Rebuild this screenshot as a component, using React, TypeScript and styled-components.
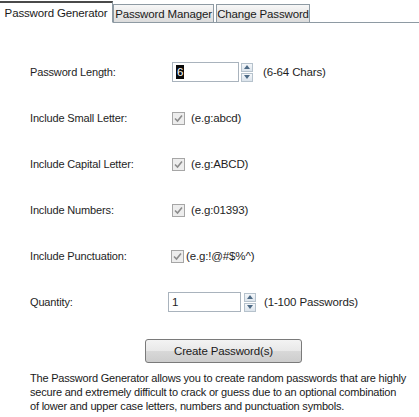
import styled, { createGlobalStyle } from "styled-components";

const GlobalStyle = createGlobalStyle`
  * {
    box-sizing: border-box;
    margin: 0;
    padding: 0;
  }

  body {
    background: #ffffff;
    font-family: "Liberation Sans", Arial, sans-serif;
    font-size: 11px;
    letter-spacing: -0.15px;
    color: #1e1e1e;
  }
`;

const Window = styled.div`
  width: 419px;
  height: 417px;
  background: #ffffff;
  overflow: hidden;
`;

const TabStrip = styled.div`
  display: flex;
  align-items: flex-end;
  height: 23px;
  border-bottom: 1px solid #8e9aa3;
`;

const Tab = styled.div<{ active?: boolean; w: number }>`
  display: flex;
  align-items: center;
  justify-content: center;
  width: ${(p) => p.w}px;
  height: ${(p) => (p.active ? "22px" : "18px")};
  margin-bottom: ${(p) => (p.active ? "-1px" : "0")};
  margin-right: ${(p) => (p.active ? "0" : "2px")};
  font-size: 11.5px;
  color: #1a1a1a;
  background: ${(p) =>
    p.active ? "#ffffff" : "linear-gradient(#f7f7f7, #e6e6e6 60%, #dcdcdc)"};
  border: 1px solid #8e9aa3;
  border-top: ${(p) => (p.active ? "2px solid #4a4a4a" : "1px solid #8e9aa3")};
  border-bottom: ${(p) => (p.active ? "1px solid #ffffff" : "none")};
  border-left: ${(p) => (p.active ? "none" : "1px solid #8e9aa3")};
  white-space: nowrap;
`;

const Form = styled.div`
  display: flex;
  flex-direction: column;
  padding: 26px 0 0 30px;
`;

const Row = styled.div`
  display: grid;
  grid-template-columns: 138px auto;
  align-items: center;
  height: 46px;
`;

const Label = styled.span`
  font-size: 11px;
`;

const Control = styled.div<{ shift?: number }>`
  display: flex;
  align-items: center;
  margin-left: ${(p) => p.shift ?? 0}px;
`;

const NumberBox = styled.div<{ w: number }>`
  display: flex;
  align-items: center;
  width: ${(p) => p.w}px;
  height: 20px;
  border: 1px solid #a9b3bd;
  background: #ffffff;
  padding-left: 3px;
  font-size: 11.5px;
`;

const Selected = styled.span`
  background: #0a0a0a;
  color: #ffffff;
  padding: 0 1px;
  line-height: 14px;
`;

const Spinner = styled.div<{ gap: number }>`
  display: flex;
  flex-direction: column;
  gap: 1px;
  margin-left: ${(p) => p.gap}px;
`;

const SpinButton = styled.div`
  width: 12px;
  height: 9px;
  border: 1px solid #b6c2cc;
  background: linear-gradient(#f4f7fa, #dce4ec);
  display: flex;
  align-items: center;
  justify-content: center;
`;

const Hint = styled.span<{ gap: number }>`
  margin-left: ${(p) => p.gap}px;
  font-size: 11.5px;
`;

const Check = styled.div`
  width: 13px;
  height: 13px;
  border: 1px solid #a6a6a6;
  background: #ededed;
  display: flex;
  align-items: center;
  justify-content: center;
`;

const ButtonRow = styled.div`
  display: flex;
  padding: 14px 0 0 145px;
`;

const Button = styled.div`
  width: 157px;
  height: 24px;
  border: 1px solid #7a7a7a;
  border-radius: 3px;
  background: linear-gradient(#f3f3f3 0%, #e8e8e8 50%, #d8d8d8 51%, #cdcdcd 100%);
  display: flex;
  align-items: center;
  justify-content: center;
  font-size: 11.5px;
  color: #1a1a1a;
`;

const About = styled.p`
  padding: 8px 12px 0 30px;
  font-size: 11px;
  letter-spacing: -0.2px;
  line-height: 14px;
  color: #1a1a1a;
`;

const Arrow = ({ up }: { up?: boolean }) => (
  <svg width="6" height="4" viewBox="0 0 6 4">
    <path d={up ? "M0 4 L3 0 L6 4 Z" : "M0 0 L3 4 L6 0 Z"} fill="#4d6a85" />
  </svg>
);

const Spin = ({ gap }: { gap: number }) => (
  <Spinner gap={gap}>
    <SpinButton>
      <Arrow up />
    </SpinButton>
    <SpinButton>
      <Arrow />
    </SpinButton>
  </Spinner>
);

const CheckBox = () => (
  <Check>
    <svg width="9" height="9" viewBox="0 0 9 9">
      <path d="M1 4.5 L3.5 7 L8 1.5" stroke="#8c8c8c" strokeWidth="1.6" fill="none" />
    </svg>
  </Check>
);

const options = [
  { label: "Include Small Letter:", hint: "(e.g:abcd)", gap: 6 },
  { label: "Include Capital Letter:", hint: "(e.g:ABCD)", gap: 6 },
  { label: "Include Numbers:", hint: "(e.g:01393)", gap: 6 },
  { label: "Include Punctuation:", hint: "(e.g:!@#$%^)", gap: 2 },
];

export default function App() {
  return (
    <Window>
      <GlobalStyle />
      <TabStrip>
        <Tab active w={113}>Password Generator</Tab>
        <Tab w={101}>Password Manager</Tab>
        <Tab w={94}>Change Password</Tab>
      </TabStrip>
      <Form>
        <Row>
          <Label>Password Length:</Label>
          <Control shift={4}>
            <NumberBox w={67}>
              <Selected>6</Selected>
            </NumberBox>
            <Spin gap={2} />
            <Hint gap={10}>(6-64 Chars)</Hint>
          </Control>
        </Row>
        {options.map((o, i) => (
          <Row key={o.label}>
            <Label>{o.label}</Label>
            <Control shift={i === 3 ? 3 : 4}>
              <CheckBox />
              <Hint gap={o.gap}>{o.hint}</Hint>
            </Control>
          </Row>
        ))}
        <Row>
          <Label>Quantity:</Label>
          <Control>
            <NumberBox w={73}>1</NumberBox>
            <Spin gap={3} />
            <Hint gap={8}>(1-100 Passwords)</Hint>
          </Control>
        </Row>
      </Form>
      <ButtonRow>
        <Button>Create Password(s)</Button>
      </ButtonRow>
      <About>
        The Password Generator allows you to create random passwords that are highly secure
        and extremely difficult to crack or guess due to an optional combination of lower and
        upper case letters, numbers and punctuation symbols.
      </About>
    </Window>
  );
}
